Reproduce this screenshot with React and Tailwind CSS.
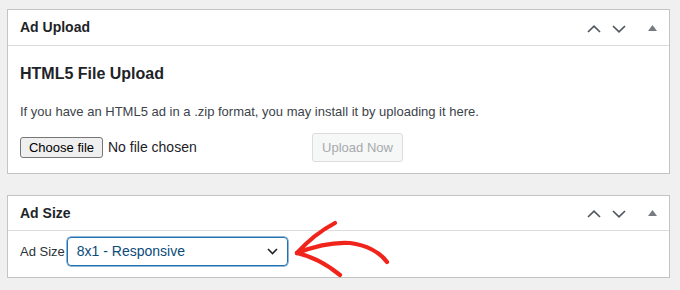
import React from 'react'

function Chevron({ up }) {
  return (
    <svg width="14" height="8" viewBox="0 0 14 8" fill="none">
      <polyline
        points={up ? '1,7 7,1.2 13,7' : '1,1 7,6.8 13,1'}
        stroke="#50575e"
        strokeWidth="1.7"
        strokeLinejoin="miter"
      />
    </svg>
  )
}

function Triangle() {
  return (
    <svg width="9" height="6" viewBox="0 0 9 6">
      <polygon points="4.5,0 9,6 0,6" fill="#787c82" />
    </svg>
  )
}

function PanelHeader({ title, h }) {
  return (
    <div className={`flex items-center justify-between border-b border-[#dcdcde] pl-[12px] pr-[12px] ${h}`}>
      <h2 className="text-[14px] font-semibold text-[#1d2327]">{title}</h2>
      <div className="flex items-center pt-[2px]">
        <span className="flex w-[14px] justify-center"><Chevron up /></span>
        <span className="ml-[11px] flex w-[14px] justify-center"><Chevron /></span>
        <span className="ml-[22px] flex w-[9px] justify-center -mt-[2px]"><Triangle /></span>
      </div>
    </div>
  )
}

export default function App() {
  return (
    <div className="relative w-[680px] h-[290px] overflow-hidden bg-[#f0f0f1] pt-[9px] pl-[7px] pr-[10px] font-['Liberation_Sans',Arial,sans-serif]">
      {/* Ad Upload */}
      <div className="border border-[#c3c4c7] bg-white">
        <PanelHeader title="Ad Upload" h="h-[36px]" />
        <div className="px-[12px] pb-[11px]">
          <h3 className="mt-[18px] text-[16px] leading-[20px] font-semibold text-[#1d2327]">HTML5 File Upload</h3>
          <p className="mt-[19px] text-[13px] leading-[18px] text-[#3c434a]">
            If you have an HTML5 ad in a .zip format, you may install it by uploading it here.
          </p>
          <div className="mt-[12px] flex h-[29px] items-center">
            <div className="flex w-[292px] items-center">
              <span className="flex h-[21px] w-[83px] items-center justify-center rounded-[3px] border border-[#767676] bg-[#efefef] text-[13px] text-black">
                Choose file
              </span>
              <span className="ml-[5px] text-[14px] text-[#1d2327]">No file chosen</span>
            </div>
            <span className="flex h-[29px] w-[91px] items-center justify-center rounded-[3px] border border-[#dcdcde] bg-[#f6f7f7] text-[13px] text-[#a7aaad]">
              Upload Now
            </span>
          </div>
        </div>
      </div>

      {/* Ad Size */}
      <div className="mt-[21px] border border-[#c3c4c7] bg-white">
        <PanelHeader title="Ad Size" h="h-[35px]" />
        <div className="flex items-center px-[12px] pt-[6px] pb-[11px]">
          <span className="text-[13px] text-[#2c3338]">Ad Size</span>
          <div className="ml-[2px] flex h-[29px] w-[221px] items-center justify-between rounded-[4px] border border-[#2271b1] shadow-[0_0_0_0.5px_#2271b1] pl-[9px] pr-[9px]">
            <span className="text-[14px] text-[#0a4b78]">8x1 - Responsive</span>
            <svg width="11" height="7" viewBox="0 0 11 7" fill="none">
              <polyline points="1,1 5.5,5.5 10,1" stroke="#1d2327" strokeWidth="1.6" />
            </svg>
          </div>
        </div>
      </div>

      {/* red annotation arrow */}
      <svg className="absolute left-0 top-0" width="680" height="290" viewBox="0 0 680 290" fill="none">
        <g stroke="#f0241b" strokeWidth="4.2" strokeLinecap="round" strokeLinejoin="round">
          <path d="M297,253 C315,246 335,242 350,243 C366,245 380,252 387,262" />
          <path d="M297,253 C306,243 318,232 335,223" />
          <path d="M297,253 C310,256 324,262 340,275" />
        </g>
      </svg>
    </div>
  )
}
